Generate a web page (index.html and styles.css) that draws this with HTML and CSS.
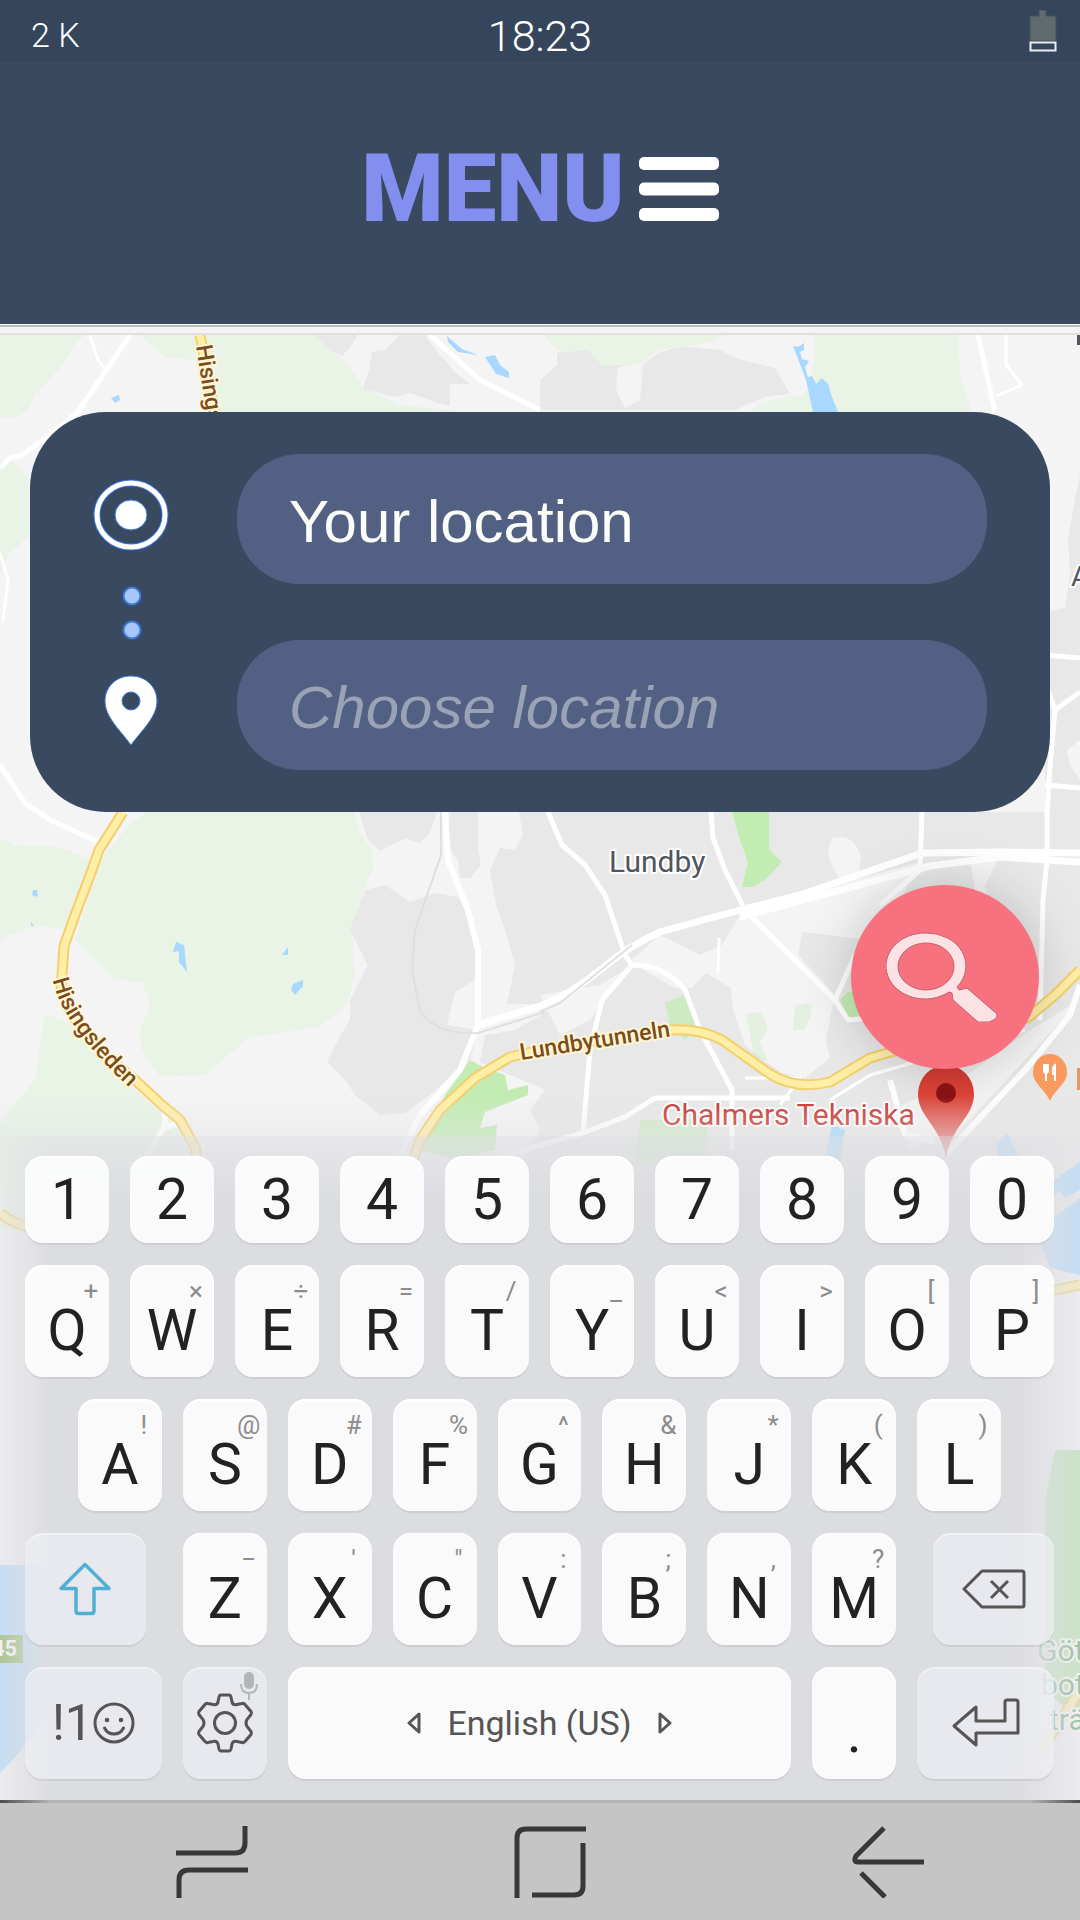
FILE: index.html
```html
<!DOCTYPE html>
<html lang="en">
<head>
<meta charset="utf-8">
<meta name="viewport" content="width=device-width, initial-scale=1">
<title>Choose location</title>
<link rel="stylesheet" href="styles.css">
</head>
<body>
<header class="top">
  <div class="status">
    <span class="status-net">2 K</span>
    <time class="status-time">18:23</time>
    <svg class="battery" viewBox="0 0 28 42" aria-hidden="true">
      <path d="M10 0h7v6h10v25H1V6h9z" fill="#5f6b6e" stroke="#444e58"/>
      <path d="M1.500 32.500h25v8h-25z" fill="none" stroke="#e8ebf0" stroke-width="2"/>
    </svg>
  </div>
  <div class="banner">
    <button class="menu" type="button">
      <span>MENU</span>
      <svg class="bars" viewBox="0 0 80 64" aria-hidden="true">
        <g fill="#fff"><rect width="80" height="13" rx="5"/><rect y="25.500" width="80" height="13" rx="5"/><rect y="51" width="80" height="13" rx="5"/></g>
      </svg>
    </button>
  </div>
</header>

<main class="stage">
  <svg class="map" viewBox="0 335 1080 1465" preserveAspectRatio="xMidYMin slice" aria-hidden="true">
    <defs>
      <path id="hisings" d="M53 980Q62 1026 133 1091"/>
      <linearGradient id="pinfade" x1="0" y1="0" x2="0" y2="1"><stop offset="0" stop-color="#cc342b"/><stop offset=".3" stop-color="#df4236"/><stop offset="1" stop-color="#e08a88"/></linearGradient>
    </defs>
    <rect y="335" width="1080" height="1465" fill="#f4f4f4"/>
    <!-- parks -->
    <g fill="#e9f4e7">
      <path d="M0 335H86L76 342 62 366 36 393 28 410 18 417H0zM142 335L150 344 165 357 195 360 215 412H470L400 405 362 386 350 367 316 335zM0 463L12 460 28 478 30 535 8 555 0 575z"/>
      <path d="M544 335H724Q708 346 680 347T643 365H602L588 350 565 353 552 345zM815 335H958L960 372 971 412H838L748 411Q770 396 805 395L815 360z"/>
      <path d="M0 838L15 845 60 847 92 860 68 932Q35 918 0 941z"/>
      <path d="M145 812H355L358 830 372 850 373 870 365 885 352 930 355 975 347 1005 320 1027 280 1033 250 1037 205 1075 160 1077 142 1050 140 1030 150 1005 143 983 115 980 90 955 75 940 100 860 125 830z"/>
      <path d="M45 1014L75 1025 130 1085 165 1115 195 1150 195 1230H0V1125L10 1110 35 1080z"/>
    </g>
    <!-- built-up areas -->
    <g fill="#e8e8e8">
      <path d="M316 335H358L350 348 342 356 330 350zM372 352L385 350 400 335H425L440 355 455 372 470 384H450V406L435 402 410 393 395 397 363 389 369 370z"/>
      <path d="M540 380L557 365V353L588 350 602 365H643Q662 346 690 347L720 350 735 358 775 368 790 394 765 397 735 410H540z"/>
      <path d="M1080 475L1075 500 1068 540 1070 575 1065 608 1045 612V820H1080z"/>
      <path d="M359 812H437L430 832 420 843 405 838 380 851 368 840zM450 812H478V848L481 865 470 878H460L458 860 448 848z"/>
      <path d="M365 890L385 885 410 902 435 893 458 897 470 920 478 950 475 980 455 992 447 1025 478 1030 470 1060 430 1095 405 1113 380 1115 355 1095 345 1080 327 1062 335 1045 350 1020V1000L368 965 350 930z"/>
      <path d="M519 812H1080V1250H480L540 1130 530 1110 545 1090 480 1062 485 1035 515 1030 560 1004 507 1004 515 965 505 930 496 905 490 870 500 848 515 850 523 835z"/>
    </g>
    <g fill="#f4f4f4">
      <path d="M618 367L643 363 640 400 625 408 616 390zM1080 740L1067 750 1070 765 1080 780zM832 838Q855 832 861 858L856 885 840 880Q828 860 828 850z"/>
      <path d="M660 935L700 955 722 945 740 915 780 900 920 862 900 900 870 940 802 932 798 955 835 995 826 1040 830 1058 805 1078 780 1072 745 1045 733 1010 731 988 706 973 692 988 675 988 640 968 632 960z"/>
      <path d="M540 995L600 985 625 970 602 1002 590 1020 560 1035zM480 1120L520 1100 540 1130 520 1160 495 1150z"/>
      <path d="M1080 1000L960 1130 910 1150 890 1110 960 1080 1030 1030zM970 860H998L985 885 988 900 975 890z"/>
    </g>
    <!-- bright parks -->
    <g fill="#c2ecb2">
      <path d="M732 812H769V850L782 862 765 880 752 887H742L748 862 740 840z"/>
      <path d="M470 1060L485 1068 505 1075 508 1090 528 1085V1095L485 1112 480 1128 497 1125 495 1150 455 1160 420 1150 445 1095zM848 992L870 990V1018H848L840 1000z"/>
      <path d="M665 1003L685 995 700 1028 685 1040 670 1025z" opacity=".7"/>
      <path d="M640 1120H708L705 1165H635z" opacity=".6"/>
      <path d="M746 1014L762 1012 768 1030 760 1042 768 1060 755 1060zM795 1005L812 1003 810 1018 804 1030 793 1030z" opacity=".3"/>
    </g>
    <!-- water -->
    <g fill="#a8d8ff">
      <path d="M447 336L462 349 478 355 458 352 448 342zM485 357L495 355 500 365 509 372V378L496 374zM111 398l8-3 1 5-5 3z"/>
      <path d="M793 346L798 347 804 343V350L800 352 802 359 809 361 805 367 808 377 812 376 816 384 822 378 828 384 832 397 838 412H813L806 380z"/>
      <path d="M176 942L184 945 187 972 179 962V951L173 952zM288 947V955H282zM303 980V986L295 995 291 990 293 984zM33 890l4 0 1 7-6-2zM31 922l3 4-3 0z"/>
      <path d="M832 1125L845 1130 835 1190H818zM1008 1134L1022 1165 1030 1190 1005 1190 996 1145zM1080 1162L1040 1190V1202L1060 1192 1065 1198 1080 1190zM1080 1198L1048 1222 1040 1240 1050 1268 1080 1275z"/>
      <path d="M0 1565H60V1660L45 1720 20 1752 0 1773zM1060 1575l8 5 6 8-6 6-8-2z"/>
    </g>
    <path d="M1055 1450H1080V1720L1045 1690V1500z" fill="#b5e2a8"/>
    <!-- streets -->
    <g fill="none" stroke="#fff" stroke-width="5" stroke-linejoin="round">
      <path d="M130 335L78 412 50 435 22 455 10 458 0 468M430 335L480 380 540 410M978 335L995 412M1045 655L1080 658M1080 692L1055 710 1048 690M1055 710Q1050 760 1047 812V860L1043 900 1040 1020M1045 785L1080 788M0 765L25 803 50 820 98 842"/>
      <path d="M548 812L562 845 585 865 605 895 625 955 632 965 602 1000 590 1050 583 1133 540 1145 480 1165M711 812L713 838 725 870 745 910 790 955 835 1000 848 1020 870 1018M835 1000L855 955M632 965Q665 965 685 990L700 1030 732 1090V1150M583 1133L625 1117 655 1098H790M922 812L920 870 880 905"/>
      <path d="M445 812L448 860 468 910 478 950V1025L460 1070 420 1115 400 1155M165 1110V1125L145 1160M165 1127L180 1123 205 1150M890 1080L905 1135 935 1142M945 1155L1025 1070 1070 1015 1080 985" stroke-width="6"/>
      <path d="M478 1025L540 1006Q570 995 600 970T660 932L740 910 800 895 922 853 1000 852 1080 853M740 917L930 866 1000 857 1080 862" stroke-width="7"/>
      <path d="M90 335L98 360 104 368M1006 335V365L1022 385 996 396M0 553L8 580 3 620M719 938L718 972M745 1078L800 1078 780 1105M830 1100L870 1075 905 1065 1025 1030" stroke-width="3"/>
    </g>
    <path d="M441 812V855L415 930 412 970 420 1010Q435 1035 478 1033L545 1012M632 945L560 1003 540 1012" fill="none" stroke="#dbe0e4" stroke-width="2"/>
    <!-- main roads -->
    <g fill="none" stroke-linejoin="round">
      <g stroke="#f5cf6c" stroke-width="11">
        <path id="mainroads" d="M200 335L215 412M123 812L99 850 92 870 75 915 64 946 61 990 75 1020 105 1055 135 1080 162 1105 180 1120 195 1147 200 1175M410 1170L420 1140 440 1110 475 1078 510 1057 545 1049 600 1040 670 1030Q700 1028 722 1040L770 1074Q795 1090 830 1082L870 1058 905 1048 1000 1030 1030 1016 1055 995 1080 970M0 1213Q16 1227 45 1230M1045 1292L1080 1285M1080 1690L1010 1800"/>
      </g>
      <use href="#mainroads" stroke="#ffefa6" stroke-width="7"/>
    </g>
    <!-- labels -->
    <g font-family="Roboto, sans-serif" paint-order="stroke" stroke="#fff" stroke-width="4" stroke-linejoin="round">
      <g fill="#7c4c18" font-size="23" font-weight="500" stroke="#fff6d8">
        <text><textPath href="#hisings">Hisingsleden</textPath></text>
        <text transform="translate(196 346) rotate(81)">Hisings</text>
        <text transform="translate(521 1060) rotate(-9)">Lundbytunneln</text>
      </g>
      <text x="609" y="872" font-size="30" fill="#50565e">Lundby</text>
      <text x="662" y="1125" font-size="30" fill="#c8362f">Chalmers Tekniska</text>
      <text x="1071" y="586" font-size="28" fill="#50565e">A</text>
      <g font-size="30" fill="#5fa268"><text x="1037" y="1661">Göt</text><text x="1041" y="1695">bot</text><text x="1049" y="1730">trä</text></g>
    </g>
    <path d="M1077 335h3v10h-3z" fill="#50565e"/>
    <path d="M0 1635H23V1663H0z" fill="#78a843"/>
    <text x="-8" y="1656" font-family="Roboto, sans-serif" font-size="22" font-weight="700" fill="#fff">45</text>
    <path d="M1077 1068h3v22h-3z" fill="#e9955f"/>
    <!-- pins -->
    <path d="M1033 1072a17 18 0 0 1 34 0c0 12-11 16-17 29-6-13-17-17-17-29z" fill="#fb9a5f"/>
    <path d="M1044 1064v6q0 3 2 3v8M1048 1064v6q0 3-2 3M1046 1064v8M1055 1081v-16q-3 2-2 9h2" fill="none" stroke="#fff" stroke-width="2"/>
    <path d="M918 1094a28 29 0 0 1 56 0c0 24-24 32-28 66-4-34-28-42-28-66z" fill="url(#pinfade)"/>
    <circle cx="946" cy="1093" r="10" fill="#8c1013"/>
  </svg>

  <form class="card">
    <svg class="route" viewBox="0 0 76 268" aria-hidden="true">
      <g stroke="#3c78dc">
        <ellipse cx="38" cy="37" rx="34" ry="32" fill="none" stroke-width="7"/>
        <ellipse cx="38" cy="37" rx="34" ry="32" fill="none" stroke="#fff" stroke-width="5"/>
        <ellipse cx="38" cy="37" rx="16" ry="15" fill="#fff"/>
        <g fill="#a9c6fa" stroke-width="2"><circle cx="39" cy="118" r="8.500"/><circle cx="39" cy="152" r="8.500"/></g>
        <path d="M38 198c15 0 26 11 26 25 0 16-15 29-26 44-11-15-26-28-26-44 0-14 11-25 26-25zm0 16a9 9 0 1 0 0 18 9 9 0 0 0 0-18z" fill="#fff" fill-rule="evenodd"/>
      </g>
    </svg>
    <div class="fields">
      <input class="field" type="text" value="Your location" aria-label="Starting point">
      <input class="field" type="text" placeholder="Choose location" aria-label="Destination">
    </div>
  </form>

  <button class="search" type="button" aria-label="Search">
    <svg viewBox="0 0 118 90" aria-hidden="true">
      <path d="M40 1a39 33 0 0 1 31 54l2 3 8-2 30 26q1 5-8 8H92L67 68l-1-7-3-1A39 33 0 1 1 40 1zm0 10a28 23.500 0 1 0 0 47 28 23.500 0 0 0 0-47z" fill="#fce2e5" stroke="#c4606c" fill-rule="evenodd"/>
    </svg>
  </button>

  <section class="keyboard" aria-label="Keyboard">
    <div class="row digits">
      <button class="key">1</button><button class="key">2</button><button class="key">3</button><button class="key">4</button><button class="key">5</button><button class="key">6</button><button class="key">7</button><button class="key">8</button><button class="key">9</button><button class="key">0</button>
    </div>
    <div class="row letters">
      <button class="key">Q<small>+</small></button><button class="key">W<small>×</small></button><button class="key">E<small>÷</small></button><button class="key">R<small>=</small></button><button class="key">T<small>/</small></button><button class="key">Y<small>_</small></button><button class="key">U<small>&lt;</small></button><button class="key">I<small>&gt;</small></button><button class="key">O<small>[</small></button><button class="key">P<small>]</small></button>
    </div>
    <div class="row letters indent">
      <button class="key">A<small>!</small></button><button class="key">S<small>@</small></button><button class="key">D<small>#</small></button><button class="key">F<small>%</small></button><button class="key">G<small>^</small></button><button class="key">H<small>&amp;</small></button><button class="key">J<small>*</small></button><button class="key">K<small>(</small></button><button class="key">L<small>)</small></button>
    </div>
    <div class="third">
      <button class="key soft" aria-label="Shift"><svg width="52" height="54" viewBox="0 0 52 54"><path d="M26 2.500L50 26.500H35V49q0 2.500-2.500 2.500h-13Q17 51.500 17 49V26.500H2z" fill="none" stroke="#4fb0d4" stroke-width="3.500" stroke-linejoin="round"/></svg></button>
      <div class="row letters">
        <button class="key">Z<small>−</small></button><button class="key">X<small>'</small></button><button class="key">C<small>"</small></button><button class="key">V<small>:</small></button><button class="key">B<small>;</small></button><button class="key">N<small>,</small></button><button class="key">M<small>?</small></button>
      </div>
      <button class="key soft" aria-label="Backspace"><svg width="64" height="40" viewBox="0 0 64 40"><path d="M20 2h40q2 0 2 2v32q0 2-2 2H20L2 20zM29 12l17 17M46 12L29 29" fill="none" stroke="#555" stroke-width="3" stroke-linejoin="round"/></svg></button>
    </div>
    <div class="bottom">
      <button class="key soft symbols" aria-label="Symbols and emoji">!1<svg width="42" height="42" viewBox="0 0 42 42"><g fill="none" stroke="#555" stroke-width="3"><circle cx="21" cy="21" r="19"/><path d="M11.500 26q3 6 9.500 6t9.500-6" stroke-linecap="round"/></g><g fill="#555"><circle cx="14" cy="18" r="2.300"/><circle cx="28" cy="18" r="2.300"/></g></svg></button>
      <button class="key soft" aria-label="Settings">
        <svg width="60" height="60" viewBox="0 0 60 60"><path d="M26 2h8q1.500 0 2 2l1 5q1 3.500 5 2.500l5-1q2-.5 3 1l6 7q1 1.500 0 3l-4 5q-2 3.500 0 7l4 5q1 1.500 0 3l-6 7q-1 1.500-3 1l-5-1q-4-1-5 2.500l-1 5q-.5 2-2 2h-8q-1.500 0-2-2l-1-5q-1-3.500-5-2.500l-5 1q-2 .5-3-1l-6-7q-1-1.500 0-3l4-5q2-3.500 0-7l-4-5q-1-1.500 0-3l6-7q1-1.500 3-1l5 1q4 1 5-2.500l1-5q.5-2 2-2z" fill="none" stroke="#555" stroke-width="3"/><circle cx="30" cy="30" r="10.500" fill="none" stroke="#555" stroke-width="3"/></svg>
        <svg class="mic" width="18" height="28" viewBox="0 0 18 28"><rect x="4" width="10" height="17" rx="5" fill="#b4b5b8"/><path d="M1 12q0 9 8 9t8-9M9 21v7" fill="none" stroke="#b4b5b8" stroke-width="2"/></svg>
      </button>
      <button class="key space">
        <svg width="14" height="22" viewBox="0 0 14 22"><path d="M12 2v18L2 11z" fill="none" stroke="#555" stroke-width="3" stroke-linejoin="round"/></svg>
        <span>English (US)</span>
        <svg width="14" height="22" viewBox="0 0 14 22"><path d="M2 2v18l10-9z" fill="none" stroke="#555" stroke-width="3" stroke-linejoin="round"/></svg>
      </button>
      <button class="key dot">.</button>
      <button class="key soft" aria-label="Enter"><svg width="68" height="50" viewBox="0 0 68 50"><path d="M2 28L24 9v14h29V4q0-2 2-2h9q2 0 2 2v31H24v12z" fill="none" stroke="#555" stroke-width="3" stroke-linejoin="round"/></svg></button>
    </div>
  </section>
</main>

<nav class="system">
  <button aria-label="Recent apps"><svg viewBox="0 0 72 72"><path d="M0 27h59q10 0 10-10V0M72 44H13Q3 44 3 54v18"/></svg></button>
  <button aria-label="Home"><svg viewBox="0 0 72 72"><path d="M72 3H12Q3 3 3 12v60M18 69h42q9 0 9-9V17"/></svg></button>
  <button aria-label="Back"><svg viewBox="0 0 72 72"><path d="M32 2L4 30q-3 6 2 6h66M9 47l24 24"/></svg></button>
</nav>
</body>
</html>
```
FILE: styles.css
```css
* {
  box-sizing: border-box;
}

body {
  margin: 0;
  min-height: 100vh;
  display: flex;
  flex-direction: column;
  font-family: Roboto, sans-serif;
  background: #f4f4f4;
}

button {
  border: 0;
  padding: 0;
  background: none;
  font-family: inherit;
  cursor: pointer;
}

svg {
  display: block;
}

/* Status bar and header */
.top {
  background: #394960;
  color: #fff;
}

.status {
  display: grid;
  grid-template-columns: 1fr auto 1fr;
  align-items: center;
  height: 62px;
  padding: 0 23px;
  background: #35465c;
}

.status-net {
  padding: 8px 8px 0;
  font-size: 34px;
  font-weight: 300;
}

.status-time {
  padding-top: 10px;
  font-size: 43px;
  line-height: 50px;
  font-weight: 300;
}

.battery {
  justify-self: end;
  width: 28px;
  height: 42px;
}

.banner {
  display: flex;
  justify-content: center;
  align-items: center;
  height: 262px;
  padding-bottom: 8px;
}

.menu {
  display: flex;
  align-items: center;
  gap: 14px;
  color: #838fee;
  font-size: 94px;
  font-weight: 900;
  line-height: 100px;
}

.bars {
  width: 80px;
  height: 64px;
}

/* Map area */
.stage {
  position: relative;
  flex: 1;
  display: flex;
  flex-direction: column;
  border-top: 1px solid #fff;
  padding-top: 10px;
  background: linear-gradient(#b9bbbe 0 2px, #f4f4f4 2px 8px, #e0e0e0 8px 10px, #f4f4f4 10px);
}

.map {
  position: absolute;
  top: 10px;
  left: 0;
  width: 100%;
  height: calc(100% - 10px);
}

.card {
  position: relative;
  display: flex;
  align-items: center;
  gap: 68px;
  margin: 77px 30px 24px;
  padding: 42px 63px;
  border-radius: 76px;
  background: #394960;
}

.route {
  flex: none;
  width: 76px;
  height: 268px;
}

.fields {
  flex: 1;
  display: grid;
  gap: 56px;
}

.field {
  width: 100%;
  height: 130px;
  padding: 4px 52px 0;
  border: 0;
  border-radius: 62px;
  background: #526083;
  color: #fbfdf8;
  font-family: "Liberation Sans", sans-serif;
  font-size: 60px;
}

.field::placeholder {
  color: #9aa3b5;
  font-style: italic;
  opacity: 1;
}

.search {
  position: absolute;
  top: 560px;
  right: 41px;
  display: grid;
  place-items: center;
  width: 188px;
  height: 184px;
  border-radius: 50%;
  background: #f7717f;
  box-shadow: 0 0 50px rgba(60, 60, 60, .25);
}

.search svg {
  width: 118px;
  height: 90px;
}

/* Keyboard */
.keyboard {
  position: relative;
  display: grid;
  gap: 22px;
  margin-top: auto;
  padding: 20px 26px 21px 25px;
  background: rgba(228, 228, 232, .5);
}

.keyboard::before {
  content: "";
  position: absolute;
  inset: 0;
  background: #dcdde1;
  mask-image: linear-gradient(to right, transparent, #000 50px calc(100% - 60px), transparent), linear-gradient(rgba(0, 0, 0, .3), #000 60px);
  mask-composite: intersect;
}

.keyboard::after {
  content: "";
  position: absolute;
  right: 0;
  bottom: 100%;
  left: 0;
  height: 40px;
  background: linear-gradient(rgba(228, 228, 232, 0), rgba(228, 228, 232, .4));
}

.row,
.third,
.bottom {
  position: relative;
  display: grid;
  grid-auto-flow: column;
  grid-auto-columns: minmax(0, 1fr);
  gap: 21px;
}

.indent {
  padding: 0 53px;
}

.third {
  grid-template-columns: 121fr 714fr 121fr;
  gap: 37px;
}

.bottom {
  grid-template-columns: 137fr 84fr 504fr 84fr 137fr;
}

.key {
  position: relative;
  display: flex;
  justify-content: center;
  align-items: center;
  height: 112px;
  border-radius: 18px;
  background: rgba(252, 252, 252, .94);
  box-shadow: inset 0 2px 1px #fff, 0 2px 1px rgba(0, 0, 0, .07);
  color: #222;
  font-size: 57px;
}

.digits .key {
  height: 87px;
}

.letters .key,
.dot {
  padding-top: 18px;
}

.key small {
  position: absolute;
  top: 11px;
  right: 0;
  width: 36px;
  color: #8c8c8c;
  font-size: 26px;
  line-height: 30px;
  text-align: center;
}

.soft {
  background: rgba(240, 242, 246, .6);
  box-shadow: inset 0 2px 1px rgba(255, 255, 255, .4), 0 2px 1px rgba(0, 0, 0, .07);
}

.symbols {
  color: #555;
  font-size: 50px;
}

.mic {
  position: absolute;
  top: 5px;
  right: 9px;
}

.space {
  gap: 26px;
  color: #555;
  font-size: 34px;
}

/* System navigation */
.system {
  display: grid;
  grid-template-columns: repeat(3, 1fr);
  justify-items: center;
  align-items: center;
  height: 120px;
  padding: 0 23px 0 43px;
  border-top: 3px solid;
  border-image: linear-gradient(to right, #4a4b4e, #b3b5b8 50px calc(100% - 50px), #4a4b4e) 3 0 0;
  background: #c5c5c5;
}

.system svg {
  width: 72px;
  height: 72px;
  fill: none;
  stroke: #383838;
  stroke-width: 5px;
}
```
